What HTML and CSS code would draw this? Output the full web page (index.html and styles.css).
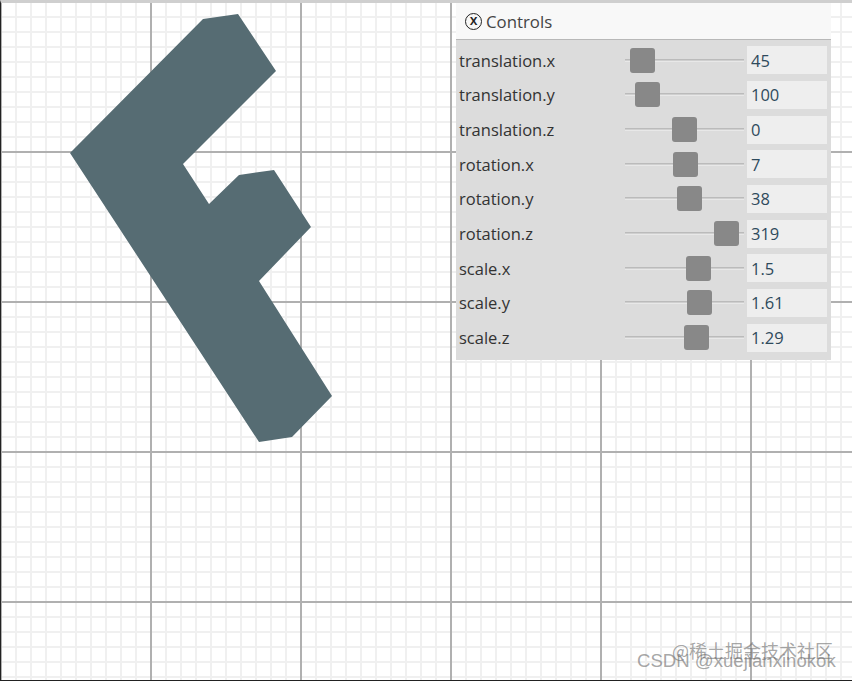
FILE: index.html
```html
<!DOCTYPE html>
<html lang="en">
<head>
<meta charset="utf-8">
<title>Controls</title>
<link rel="stylesheet" href="styles.css">
</head>
<body>
<main class="canvas">
  <svg class="shape" width="852" height="681" viewBox="0 0 852 681" aria-hidden="true">
    <polygon fill="#566c73" points="70,153 203,19 238,14 276,71 183,164 209,204 239,175 274,170 311,227 259,281 332,396 292,437 259,442"/>
  </svg>
  <section class="panel">
    <header class="panel-title"><span class="close">x</span><span>Controls</span></header>
    <div class="rows">
      <div class="row"><span class="label">translation.x</span><div class="track"><i class="thumb" style="left:15%"></i></div><span class="value">45</span></div>
      <div class="row"><span class="label">translation.y</span><div class="track"><i class="thumb" style="left:19.3%"></i></div><span class="value">100</span></div>
      <div class="row"><span class="label">translation.z</span><div class="track"><i class="thumb" style="left:50%"></i></div><span class="value">0</span></div>
      <div class="row"><span class="label">rotation.x</span><div class="track"><i class="thumb" style="left:50.6%"></i></div><span class="value">7</span></div>
      <div class="row"><span class="label">rotation.y</span><div class="track"><i class="thumb" style="left:54%"></i></div><span class="value">38</span></div>
      <div class="row"><span class="label">rotation.z</span><div class="track"><i class="thumb" style="left:85%"></i></div><span class="value">319</span></div>
      <div class="row"><span class="label">scale.x</span><div class="track"><i class="thumb" style="left:62%"></i></div><span class="value">1.5</span></div>
      <div class="row"><span class="label">scale.y</span><div class="track"><i class="thumb" style="left:63%"></i></div><span class="value">1.61</span></div>
      <div class="row"><span class="label">scale.z</span><div class="track"><i class="thumb" style="left:60.5%"></i></div><span class="value">1.29</span></div>
    </div>
  </section>
  <div class="mark mark-top">@稀土掘金技术社区</div>
  <div class="mark mark-bottom">CSDN @xuejianxinokok</div>
</main>
</body>
</html>
```
FILE: styles.css
```css
html, body {
  margin: 0;
  padding: 0;
  width: 852px;
  height: 681px;
  overflow: hidden;
  background: #fff;
}

.canvas {
  position: relative;
  box-sizing: border-box;
  width: 852px;
  height: 681px;
  overflow: hidden;
  border-left: 1px solid #222;
  border-top: 3px solid #cfcfcf;
  border-bottom: 1px solid #222;
  background-color: #fff;
  background-image:
    linear-gradient(to right, #b0b0b0 2px, transparent 2px),
    linear-gradient(to bottom, #b0b0b0 2px, transparent 2px),
    linear-gradient(to right, #f0f0f0 2px, transparent 2px),
    linear-gradient(to bottom, #f0f0f0 2px, transparent 2px);
  background-size: 150px 150px, 150px 150px, 15px 15px, 15px 15px;
  background-position: 149px 0, 0 148px, 14px 0, 0 13px;
}

.shape {
  position: absolute;
  left: -1px;
  top: -3px;
}

.panel {
  position: absolute;
  left: 455px;
  top: 0;
  width: 375px;
  height: 357px;
  display: flex;
  flex-direction: column;
  font-family: "Open Sans", "Noto Sans", sans-serif;
  font-size: 16.5px;
  color: #333;
}

.panel-title {
  box-sizing: border-box;
  height: 37px;
  flex: none;
  display: flex;
  align-items: center;
  gap: 4px;
  padding-left: 9px;
  background: #f8f8f8;
  border-bottom: 1px solid #b8b8b8;
  font-size: 16.8px;
  color: #444;
}

.close {
  box-sizing: border-box;
  width: 17px;
  height: 17px;
  border: 1px solid #222;
  border-radius: 50%;
  display: flex;
  align-items: center;
  justify-content: center;
  font-size: 14px;
  line-height: 1;
  font-weight: 600;
  color: #222;
  padding-bottom: 3px;
}

.rows {
  flex: 1;
  display: grid;
  grid-template-rows: repeat(9, 1fr);
  padding: 3px 4px 5px 3px;
  background: #dcdcdc;
}

.row {
  display: grid;
  grid-template-columns: 163px 119px 80px;
  column-gap: 3px;
  align-items: center;
  min-height: 0;
}

.label {
  white-space: nowrap;
}

.track {
  position: relative;
  height: 3px;
  background: #cfcfcf;
  border-top: 1px solid #bbb;
  border-bottom: 1px solid #e8e8e8;
  box-sizing: border-box;
}

.thumb {
  position: absolute;
  top: 50%;
  width: 25px;
  height: 25px;
  margin: -12.5px 0 0 -12.5px;
  background: #888;
  border-radius: 3px;
}

.value {
  box-sizing: border-box;
  height: 28px;
  display: flex;
  align-items: center;
  padding-left: 4px;
  background: #eeeeee;
  color: #2e4a5c;
  font-size: 16.5px;
}

.mark {
  position: absolute;
  white-space: nowrap;
  color: rgba(110, 110, 110, 0.62);
  line-height: 1;
}

.mark-top {
  left: 671px;
  top: 638px;
  font-family: "Noto Sans CJK SC", sans-serif;
  font-size: 18px;
}

.mark-bottom {
  left: 636px;
  top: 649px;
  font-family: "Liberation Sans", sans-serif;
  font-size: 18.6px;
}
```
